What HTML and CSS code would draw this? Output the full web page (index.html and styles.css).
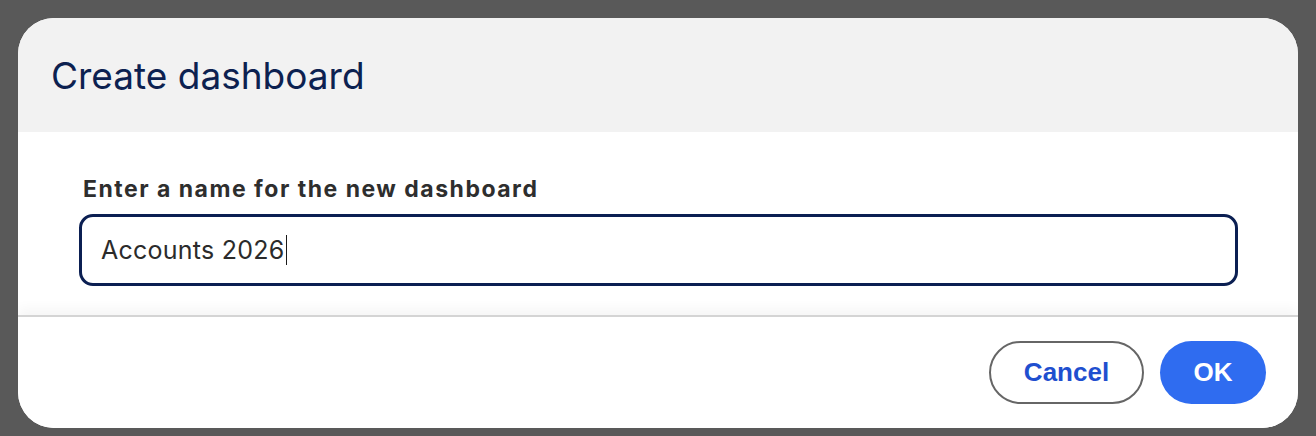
FILE: index.html
```html
<!DOCTYPE html>
<html lang="en">
<head>
<meta charset="utf-8">
<title>Create dashboard</title>
<link rel="stylesheet" href="styles.css">
</head>
<body>
  <div class="dialog" role="dialog" aria-labelledby="dlg-title">
    <header class="dialog-header">
      <h1 id="dlg-title" class="dialog-title">Create dashboard</h1>
    </header>
    <section class="dialog-body">
      <label class="field-label" for="dash-name">Enter a name for the new dashboard</label>
      <div class="text-field" id="dash-name"><span class="text-value">Accounts 2026</span><span class="caret"></span></div>
    </section>
    <footer class="dialog-footer">
      <button class="btn btn-secondary" type="button">Cancel</button>
      <button class="btn btn-primary" type="button">OK</button>
    </footer>
  </div>
</body>
</html>
```

FILE: styles.css
```css
* {
  box-sizing: border-box;
}

html, body {
  margin: 0;
  height: 100%;
}

body {
  background: #595959;
  padding: 18px;
  font-family: Inter, "Noto Sans", sans-serif;
}

.dialog {
  width: 1280px;
  height: 410px;
  background: #ffffff;
  border-radius: 36px;
  overflow: hidden;
  display: flex;
  flex-direction: column;
}

.dialog-header {
  height: 114px;
  background: #f2f2f2;
  display: flex;
  align-items: center;
  padding-left: 33px;
}

.dialog-title {
  margin: 0;
  font-size: 37px;
  font-weight: 400;
  color: #0c2150;
}

.dialog-body {
  flex: 1;
  padding: 43px 60px 0 61px;
  display: flex;
  flex-direction: column;
}

.field-label {
  font-size: 23px;
  font-weight: 700;
  letter-spacing: 1.5px;
  color: #2e2e2e;
  padding-left: 4px;
  margin-bottom: 11px;
}

.text-field {
  height: 72px;
  border: 3px solid #0b1f52;
  border-radius: 14px;
  display: flex;
  align-items: center;
  padding-left: 19px;
  font-size: 25px;
  letter-spacing: 0.25px;
  color: #2b2b2b;
}

.caret {
  display: inline-block;
  width: 1.5px;
  height: 30px;
  background: #1a1a1a;
  margin-left: 1px;
}

.dialog-footer {
  height: 113px;
  border-top: 2px solid #d4d4d4;
  box-shadow: 0 -6px 12px rgba(0, 0, 0, 0.045);
  display: flex;
  align-items: center;
  justify-content: flex-end;
  gap: 16px;
  padding-right: 32px;
  background: #ffffff;
}

.btn {
  height: 63px;
  border-radius: 32px;
  font-family: "Liberation Sans", Arial, sans-serif;
  font-weight: 700;
  font-size: 26px;
  cursor: pointer;
}

.btn-secondary {
  width: 155px;
  background: #ffffff;
  border: 2px solid #666666;
  color: #1f4fcf;
}

.btn-primary {
  width: 106px;
  background: #2f6cf0;
  border: none;
  color: #ffffff;
}
```
